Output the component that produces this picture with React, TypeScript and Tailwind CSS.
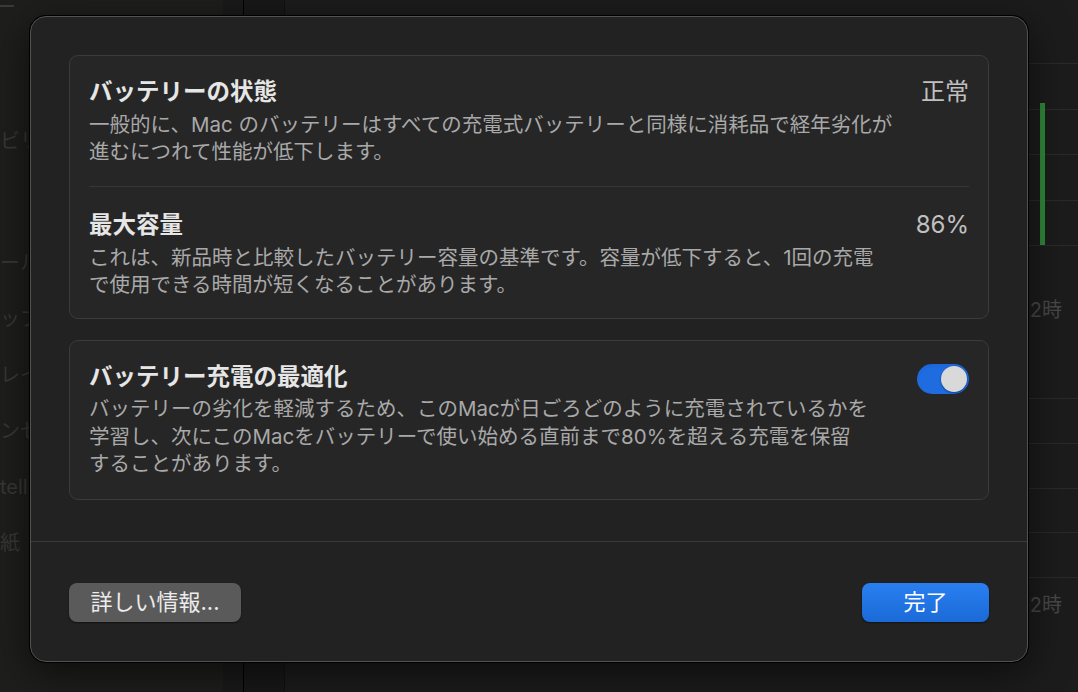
const sidebarItems = ["ール", "ップ", "レイ", "ンセ", "tell", "紙"];

const Chart = ({ bar, row }: { bar: boolean; row: string }) => {
  return (
    <div className="flex flex-col border-b border-[#2a2a2a] relative">
      {[0, 1, 2, 3].map((i) => (
        <div key={i} className={row + " border-t border-[#2a2a2a]"}></div>
      ))}
      {bar && (
        <div className="absolute right-[33px] bottom-0 w-[5px] h-[142px] bg-[#2f8a3a]"></div>
      )}
    </div>
  );
};

const Row = ({
  title,
  lines,
  value,
  className,
}: {
  title: string;
  lines: string[];
  value?: string;
  className?: string;
}) => {
  return (
    <div className={"flex flex-row justify-between items-start " + (className ?? "")}>
      <div className="flex flex-col">
        <div className="text-[23.5px] leading-[30px] font-bold text-[#e6e6e6]">{title}</div>
        <div className="mt-[4px] text-[20.5px] leading-[27px] text-[#a9a9a9] whitespace-nowrap">
          {lines.map((l, i) => (
            <div key={i}>{l}</div>
          ))}
        </div>
      </div>
      {value && <div className="text-[24px] leading-[30px] text-[#c0c0c0]">{value}</div>}
    </div>
  );
};

const App = () => {
  return (
    <div className="relative w-full h-[692px] overflow-hidden bg-[#1b1b1b] font-['Inter','Noto_Sans_CJK_JP',sans-serif]">
      {/* background window, dimmed behind the sheet */}
      <div className="flex flex-row h-full">
        <div className="w-[223px] h-full bg-[#1e1e1c] flex flex-col text-[20px] text-[#383837] whitespace-nowrap">
          <div className="mt-[5px] h-[2px] w-[14px] bg-[#3a3a3a]"></div>
          <div className="mt-[121px] leading-[26px]">ビリ</div>
          <div className="mt-[81px] flex flex-col">
            {sidebarItems.map((item) => (
              <div key={item} className="h-[56px] leading-[26px] pt-[15px]">
                {item}
              </div>
            ))}
          </div>
        </div>
        <div className="w-[20px] h-full bg-[#1a1a1a]"></div>
        <div className="w-[42px] h-full bg-[#181818] border-l border-black border-r border-r-[#111111]"></div>
        <div className="flex-1 h-full bg-[#1c1c1c] flex flex-col">
          <div className="mt-[63px]">
            <Chart bar={true} row="h-[45.5px]" />
          </div>
          <div className="mt-[50px] text-right pr-[16px] text-[20px] leading-[28px] text-[#484848]">12時</div>
          <div className="mt-[74px]">
            <Chart bar={false} row="h-[44.75px]" />
          </div>
          <div className="mt-[13px] text-right pr-[16px] text-[20px] leading-[28px] text-[#484848]">12時</div>
        </div>
      </div>

      {/* dialog sheet */}
      <div className="absolute left-[30px] top-[16px] w-[998px] h-[646px] rounded-[16px] bg-[#222222] border border-[#525252] ring-1 ring-black shadow-[0_10px_40px_rgba(0,0,0,0.6)] flex flex-col">
        <div className="px-[38px] pt-[38px] pb-[41px] flex flex-col">
          <div className="rounded-[9px] border border-[#3b3b3b] bg-[#262626] px-[19px] flex flex-col">
            <Row
              className="pt-[21px] pb-[21px] border-b border-[#363636]"
              title="バッテリーの状態"
              value="正常"
              lines={[
                "一般的に、Mac のバッテリーはすべての充電式バッテリーと同様に消耗品で経年劣化が",
                "進むにつれて性能が低下します。",
              ]}
            />
            <Row
              className="pt-[23px] pb-[20px]"
              title="最大容量"
              value="86%"
              lines={[
                "これは、新品時と比較したバッテリー容量の基準です。容量が低下すると、1回の充電",
                "で使用できる時間が短くなることがあります。",
              ]}
            />
          </div>

          <div className="mt-[21px] rounded-[9px] border border-[#3b3b3b] bg-[#262626] px-[19px] pt-[21px] pb-[21px] flex flex-row justify-between items-start">
            <div className="flex flex-col">
              <div className="text-[23.5px] leading-[30px] font-bold text-[#e6e6e6]">バッテリー充電の最適化</div>
              <div className="mt-[3px] text-[20.5px] leading-[27.5px] text-[#a9a9a9] whitespace-nowrap">
                <div>バッテリーの劣化を軽減するため、このMacが日ごろどのように充電されているかを</div>
                <div>学習し、次にこのMacをバッテリーで使い始める直前まで80%を超える充電を保留</div>
                <div>することがあります。</div>
              </div>
            </div>
            <div className="mt-[2px] w-[52px] h-[30px] rounded-full bg-[#1f6be0] flex flex-row items-center justify-end pr-[2px] shadow-inner">
              <div className="w-[26px] h-[26px] rounded-full bg-[#d9d9d9] shadow-[0_1px_2px_rgba(0,0,0,0.4)]"></div>
            </div>
          </div>
        </div>

        <div className="border-t border-[#3a3a3a] px-[38px] pt-[41px] flex flex-row justify-between">
          <button className="w-[172px] h-[39px] rounded-[8px] bg-[#5a5a5a] text-[22px] text-[#ececec] shadow-[0_1px_2px_rgba(0,0,0,0.5)] flex items-center justify-center">
            詳しい情報...
          </button>
          <button className="w-[127px] h-[39px] rounded-[8px] bg-gradient-to-b from-[#2a7ff0] to-[#1a6ad8] text-[22px] text-white shadow-[0_1px_2px_rgba(0,0,0,0.5)] flex items-center justify-center">
            完了
          </button>
        </div>
      </div>
    </div>
  );
};

export default App;
